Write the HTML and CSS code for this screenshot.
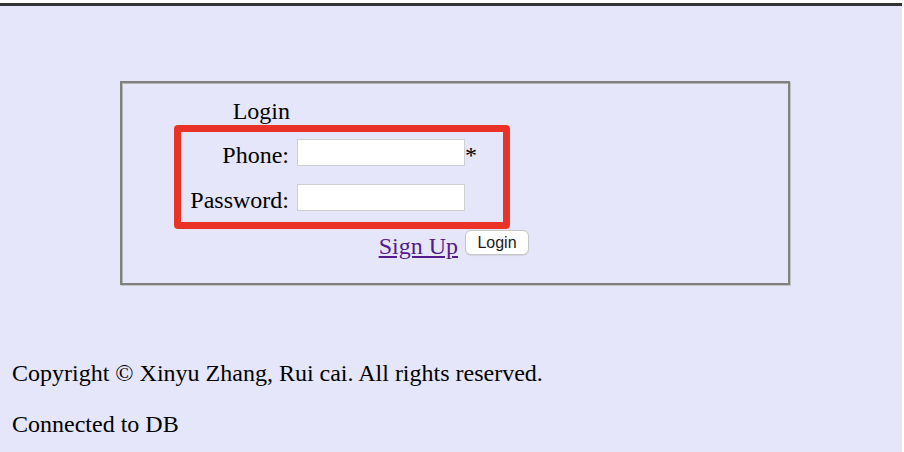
FILE: index.html
```html
<!DOCTYPE html>
<html>
<head>
<meta charset="utf-8">
<title>Login</title>
<link rel="stylesheet" href="styles.css">
</head>
<body>
<div class="topbar"></div>
<main class="page">
  <section class="login-box">
    <form class="login-grid">
      <div class="cell label title">Login</div>
      <div class="cell"></div>
      <div class="cell"></div>

      <label class="cell label" for="phone">Phone:</label>
      <div class="cell"><input class="field" id="phone" type="text"></div>
      <div class="cell note">*</div>

      <label class="cell label" for="pwd">Password:</label>
      <div class="cell"><input class="field" id="pwd" type="password"></div>
      <div class="cell"></div>

      <div class="cell"></div>
      <div class="cell link-cell"><a class="signup" href="#">Sign Up</a></div>
      <div class="cell"><button class="btn" type="button">Login</button></div>
    </form>
    <div class="highlight"></div>
  </section>
  <footer class="footer">
    <p>Copyright © Xinyu Zhang, Rui cai. All rights reserved.</p>
    <p>Connected to DB</p>
  </footer>
</main>
</body>
</html>
```

FILE: styles.css
```css
html {
  background: #e6e6fa;
}
body {
  margin: 0;
  font-family: "Liberation Serif", "Times New Roman", serif;
  font-size: 24px;
  color: #000;
  background: #e6e6fa;
  min-height: 452px;
  border-right: 2px solid #ffffff;
  box-sizing: border-box;
}
.topbar {
  height: 3px;
  border-top: 3px solid #ffffff;
  background: #333333;
}
.page {
  padding: 75px 12px 0 12px;
}
.login-box {
  position: relative;
  box-sizing: border-box;
  width: 670px;
  height: 204px;
  margin-left: 108px;
  border: 2px solid #808080;
  box-shadow: inset 1px 1px 0 #b4b4b4, 1px 1px 0 #c4c4c4;
  padding: 14px 0 0 0;
}
.login-grid {
  display: grid;
  grid-template-columns: 175px 168px 64px;
  grid-template-rows: 42px 45px 46px 25px;
  margin: 0;
}
.cell {
  line-height: 28px;
}
.label {
  text-align: right;
  padding-right: 8px;
  margin-top: 2px;
  display: block;
}
.title {
  margin-top: 0;
  padding-right: 7px;
}
.note {
  margin-top: 2px;
}
.field {
  display: block;
  box-sizing: border-box;
  width: 168px;
  height: 27px;
  margin: 0;
  border: 1px solid #cfcfcf;
  background: #ffffff;
  padding: 0 4px;
  font-size: 16px;
}
.link-cell {
  text-align: right;
  padding-right: 7px;
  padding-top: 2px;
}
.signup {
  color: #551a8b;
  text-decoration: underline;
}
.btn {
  display: block;
  box-sizing: border-box;
  width: 64px;
  height: 25px;
  margin: 0;
  padding: 0;
  border: 1px solid #c6c6c6;
  border-radius: 6px;
  background: #ffffff;
  font-family: "Liberation Sans", Arial, sans-serif;
  font-size: 16px;
  color: #1a1a1a;
  box-shadow: 0 1px 1px rgba(0, 0, 0, 0.08);
}
.highlight {
  position: absolute;
  left: 52px;
  top: 42px;
  width: 336px;
  height: 104px;
  box-sizing: border-box;
  border: 7px solid #ea3326;
  border-radius: 4px;
  pointer-events: none;
}
.footer {
  display: flex;
  flex-direction: column;
  gap: 23px;
  margin-top: 74px;
}
.footer p {
  margin: 0;
  line-height: 28px;
}
```
